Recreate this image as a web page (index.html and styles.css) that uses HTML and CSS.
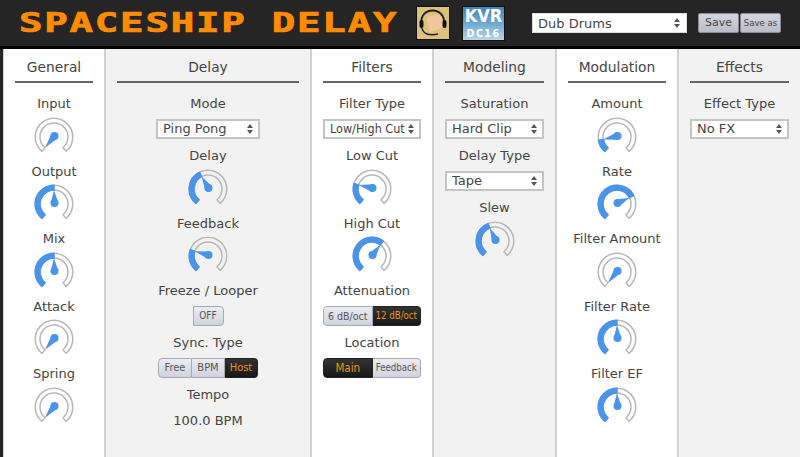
FILE: index.html
```html
<!DOCTYPE html>
<html lang="en">
<head>
  <meta charset="UTF-8">
  <title>Spaceship Delay</title>
  <link rel="stylesheet" href="styles.css">
</head>
<body>

<div class="header">
  <div class="title"><span>SPACESHIP DELAY</span></div>
  <div class="face">
    <svg width="32" height="32" viewBox="0 0 32 32">
      <path d="M10 13 Q9 9 13 8.5 L21 7.5 Q25 7.5 25 11 L26 20 L13 25 Z" fill="#f0c79a"/>
      <path d="M4.5 17 C2 -1 29 -1 27 17" fill="none" stroke="#222" stroke-width="2"/>
      <rect x="2.5" y="13" width="4" height="8" rx="2" fill="#111"/>
      <rect x="25.5" y="13" width="4" height="8" rx="2" fill="#111"/>
      <path d="M5 21 C6 27 12 29 21 27" fill="none" stroke="#222" stroke-width="1.5"/>
    </svg>
  </div>
  <div class="kvr"><b>KVR</b><i>DC16</i></div>
  <div class="select preset">
    <select><option>Dub Drums</option></select>
  </div>
  <div class="save-btns">
    <div class="save-btn">Save</div>
    <div class="save-btn small">Save as</div>
  </div>
</div>

<div class="panels">

  <div class="col">
    <h2>General</h2>
    <div class="label">Input</div>
    <div class="knob" data-angle="-140"></div>
    <div class="label">Output</div>
    <div class="knob" data-angle="0"></div>
    <div class="label">Mix</div>
    <div class="knob" data-angle="0"></div>
    <div class="label">Attack</div>
    <div class="knob" data-angle="-140"></div>
    <div class="label">Spring</div>
    <div class="knob" data-angle="-140"></div>
  </div>

  <div class="col grey">
    <h2>Delay</h2>
    <div class="label">Mode</div>
    <div class="select mode"><select><option>Ping Pong</option></select></div>
    <div class="label">Delay</div>
    <div class="knob" data-angle="-27"></div>
    <div class="label">Feedback</div>
    <div class="knob" data-angle="-70"></div>
    <div class="label">Freeze / Looper</div>
    <div class="seg"><div class="off-btn">OFF</div></div>
    <div class="label">Sync. Type</div>
    <div class="seg sync">
      <div>Free</div>
      <div>BPM</div>
      <div class="on">Host</div>
    </div>
    <div class="label">Tempo</div>
    <div class="label value">100.0 BPM</div>
  </div>

  <div class="col">
    <h2>Filters</h2>
    <div class="label">Filter Type</div>
    <div class="select"><select class="narrow"><option>Low/High Cut</option></select></div>
    <div class="label">Low Cut</div>
    <div class="knob" data-angle="-73"></div>
    <div class="label">High Cut</div>
    <div class="knob" data-angle="37"></div>
    <div class="label">Attenuation</div>
    <div class="seg">
      <div>6 dB/oct</div>
      <div class="on tight">12 dB/oct</div>
    </div>
    <div class="label">Location</div>
    <div class="seg">
      <div class="on main">Main</div>
      <div class="tight">Feedback</div>
    </div>
  </div>

  <div class="col grey">
    <h2>Modeling</h2>
    <div class="label">Saturation</div>
    <div class="select"><select><option>Hard Clip</option></select></div>
    <div class="label">Delay Type</div>
    <div class="select"><select><option>Tape</option></select></div>
    <div class="label">Slew</div>
    <div class="knob" data-angle="-22"></div>
  </div>

  <div class="col">
    <h2>Modulation</h2>
    <div class="label">Amount</div>
    <div class="knob" data-angle="-100"></div>
    <div class="label">Rate</div>
    <div class="knob" data-angle="63"></div>
    <div class="label">Filter Amount</div>
    <div class="knob" data-angle="-140"></div>
    <div class="label">Filter Rate</div>
    <div class="knob" data-angle="0"></div>
    <div class="label">Filter EF</div>
    <div class="knob" data-angle="0"></div>
  </div>

  <div class="col grey last">
    <h2>Effects</h2>
    <div class="label">Effect Type</div>
    <div class="select"><select><option>No FX</option></select></div>
  </div>

</div>

<script src="knobs.js"></script>
</body>
</html>
```

FILE: styles.css
```css
* {
  box-sizing: border-box;
  margin: 0;
  padding: 0;
}
body {
  font-family: "DejaVu Sans", sans-serif;
  height: 100vh;
  overflow: hidden;
  background: #252525;
  color: #444;
}
.header {
  display: flex;
  align-items: center;
  height: 49px;
  padding-left: 19px;
  border-bottom: 3px solid #000;
  background: #252525;
}
.title {
  flex: none;
  width: 378px;
  white-space: nowrap;
}
.title span {
  display: inline-block;
  font-family: "DejaVu Sans Mono", monospace;
  font-weight: bold;
  font-size: 26px;
  letter-spacing: 1.2px;
  color: #ff8c00;
  -webkit-text-stroke: 0.7px #ff8c00;
  transform: scaleX(1.5);
  transform-origin: left center;
}
.face {
  flex: none;
  width: 34px;
  height: 34px;
  margin-left: 19px;
  border: 1px solid #111;
  background: #dcc27f;
}
.kvr {
  flex: none;
  display: flex;
  flex-direction: column;
  align-items: center;
  width: 43px;
  height: 35px;
  margin-left: 12px;
  border: 1px solid #111;
  background: linear-gradient(#3f86bb, #6fa8d0 50%, #b9d6e8);
  color: #fff;
  font-family: "DejaVu Sans Condensed", "DejaVu Sans", sans-serif;
  font-weight: bold;
}
.kvr b {
  font-size: 18px;
  line-height: 18px;
}
.kvr i {
  margin-top: 2px;
  font-style: normal;
  font-size: 10.5px;
  line-height: 12px;
  letter-spacing: 1.5px;
}
.select.preset {
  flex: none;
  width: 155px;
  margin: 0 0 0 27px;
}
.save-btns {
  display: flex;
  gap: 1px;
  margin-left: 11px;
}
.save-btn {
  width: 41px;
  height: 20px;
  border: 1px solid #8d8d99;
  border-radius: 2px;
  background: linear-gradient(#d6d6e0, #bcbcc8);
  font-size: 11px;
  line-height: 18px;
  text-align: center;
}
.save-btn.small {
  font-family: "DejaVu Sans Condensed", "DejaVu Sans", sans-serif;
  font-size: 9.5px;
}

.panels {
  display: grid;
  grid-template-columns: 103px 206px 122px 123px 122px 1fr;
  height: 408px;
  margin-left: 3px;
}
.col {
  padding: 8px 11px 0;
  border-right: 2px solid #d0d0d0;
  background: #fff;
  text-align: center;
}
.col:first-child {
  border-left: 1px solid #d0d0d0;
}
.col.grey {
  background: #f2f2f2;
}
.col.last {
  border-right: none;
}
h2 {
  height: 26px;
  margin-bottom: 10px;
  border-bottom: 2px solid #666;
  font-weight: normal;
  font-size: 13.8px;
  line-height: 20px;
}
.label {
  height: 20px;
  font-size: 13px;
  line-height: 21px;
}
.value {
  margin-top: 6px;
}
.knob {
  height: 40px;
  margin: 3.5px 0 4px;
}
.knob svg {
  display: block;
  margin: 0 auto;
}

.select {
  position: relative;
  height: 20px;
  margin: 5.5px 0 6.5px;
}
.select.mode {
  width: 104px;
  margin-left: auto;
  margin-right: auto;
}
.select select {
  display: block;
  width: 100%;
  height: 20px;
  padding: 0 16px 0 5px;
  border: 2px solid #c4c4c4;
  border-radius: 0;
  appearance: none;
  background: #fff;
  color: #444;
  font-family: inherit;
  font-size: 13px;
}
.select select.narrow {
  padding: 0 0 0 5px;
  font-family: "DejaVu Sans Condensed", "DejaVu Sans", sans-serif;
  font-size: 12.5px;
}
.select::before,
.select::after {
  content: "";
  position: absolute;
  right: 7px;
  border-left: 3px solid transparent;
  border-right: 3px solid transparent;
  pointer-events: none;
}
.select::before {
  top: 5px;
  border-bottom: 4px solid #555;
}
.select::after {
  top: 11px;
  border-top: 4px solid #555;
}
.preset select {
  border: 1px solid #ddd;
}

.seg {
  display: flex;
  justify-content: center;
  height: 20px;
  margin: 6px 0;
  font-family: "DejaVu Sans Condensed", "DejaVu Sans", sans-serif;
  font-size: 10.5px;
  line-height: 18px;
}
.seg div {
  flex: 1;
  border: 1px solid #a9a9b2;
  border-left-width: 0;
  background: linear-gradient(#ececf2, #d2d2de);
  color: #555;
}
.seg div:first-child {
  border-left-width: 1px;
  border-radius: 4px 0 0 4px;
}
.seg div:last-child {
  border-radius: 0 4px 4px 0;
}
.seg .on {
  border-color: #222;
  background: linear-gradient(#333, #181818);
  color: #e8960c;
}
.seg .tight {
  font-size: 9.6px;
}
.seg .main {
  font-size: 11.5px;
}
.seg .off-btn {
  flex: none;
  width: 31px;
  border-left-width: 1px;
  border-radius: 4px;
  font-size: 10px;
}
.seg.sync {
  width: 100px;
  margin-left: auto;
  margin-right: auto;
  font-size: 11px;
}
```

FILE: knobs.js
```js
// draws the dial of every .knob from its data-angle (degrees from the top)
const START = -140;
const STOP = 140;
const C = 20;
const R_OUT = 18.75;
const R_IN = 14;

function pt(r, deg) {
  const a = deg * Math.PI / 180;
  return (C + r * Math.sin(a)).toFixed(2) + ' ' + (C - r * Math.cos(a)).toFixed(2);
}

function arc(from, to) {
  const big = to - from > 180 ? 1 : 0;
  return 'M' + pt(R_OUT, from) +
    ' A' + R_OUT + ' ' + R_OUT + ' 0 ' + big + ' 1 ' + pt(R_OUT, to) +
    ' L' + pt(R_IN, to) +
    ' A' + R_IN + ' ' + R_IN + ' 0 ' + big + ' 0 ' + pt(R_IN, from) + ' Z';
}

function needle(angle) {
  const a = angle * Math.PI / 180;
  const bx = C + 0.5;
  const by = C - 1;
  const tx = C + 14 * Math.sin(a);
  const ty = C - 14 * Math.cos(a);
  return '<circle cx="' + bx + '" cy="' + by + '" r="4"/>' +
    '<path d="M' + tx.toFixed(2) + ' ' + ty.toFixed(2) +
    ' L' + (bx + 3.8 * Math.cos(a)).toFixed(2) + ' ' + (by + 3.8 * Math.sin(a)).toFixed(2) +
    ' L' + (bx - 3.8 * Math.cos(a)).toFixed(2) + ' ' + (by - 3.8 * Math.sin(a)).toFixed(2) + ' Z"/>';
}

document.querySelectorAll('.knob').forEach(function (knob) {
  const angle = Number(knob.dataset.angle);
  let html = '<svg width="40" height="40" viewBox="0 0 40 40">' +
    '<path d="' + arc(START, STOP) + '" fill="none" stroke="#b8b8b8" stroke-width="1.5" stroke-linejoin="round"/>';
  if (angle > START) {
    html += '<path d="' + arc(START, angle) + '" fill="#4a94ea" stroke="#4a94ea" stroke-width="1.5" stroke-linejoin="round"/>';
  }
  html += '<g fill="#4a94ea">' + needle(angle) + '</g></svg>';
  knob.innerHTML = html;
});
```
